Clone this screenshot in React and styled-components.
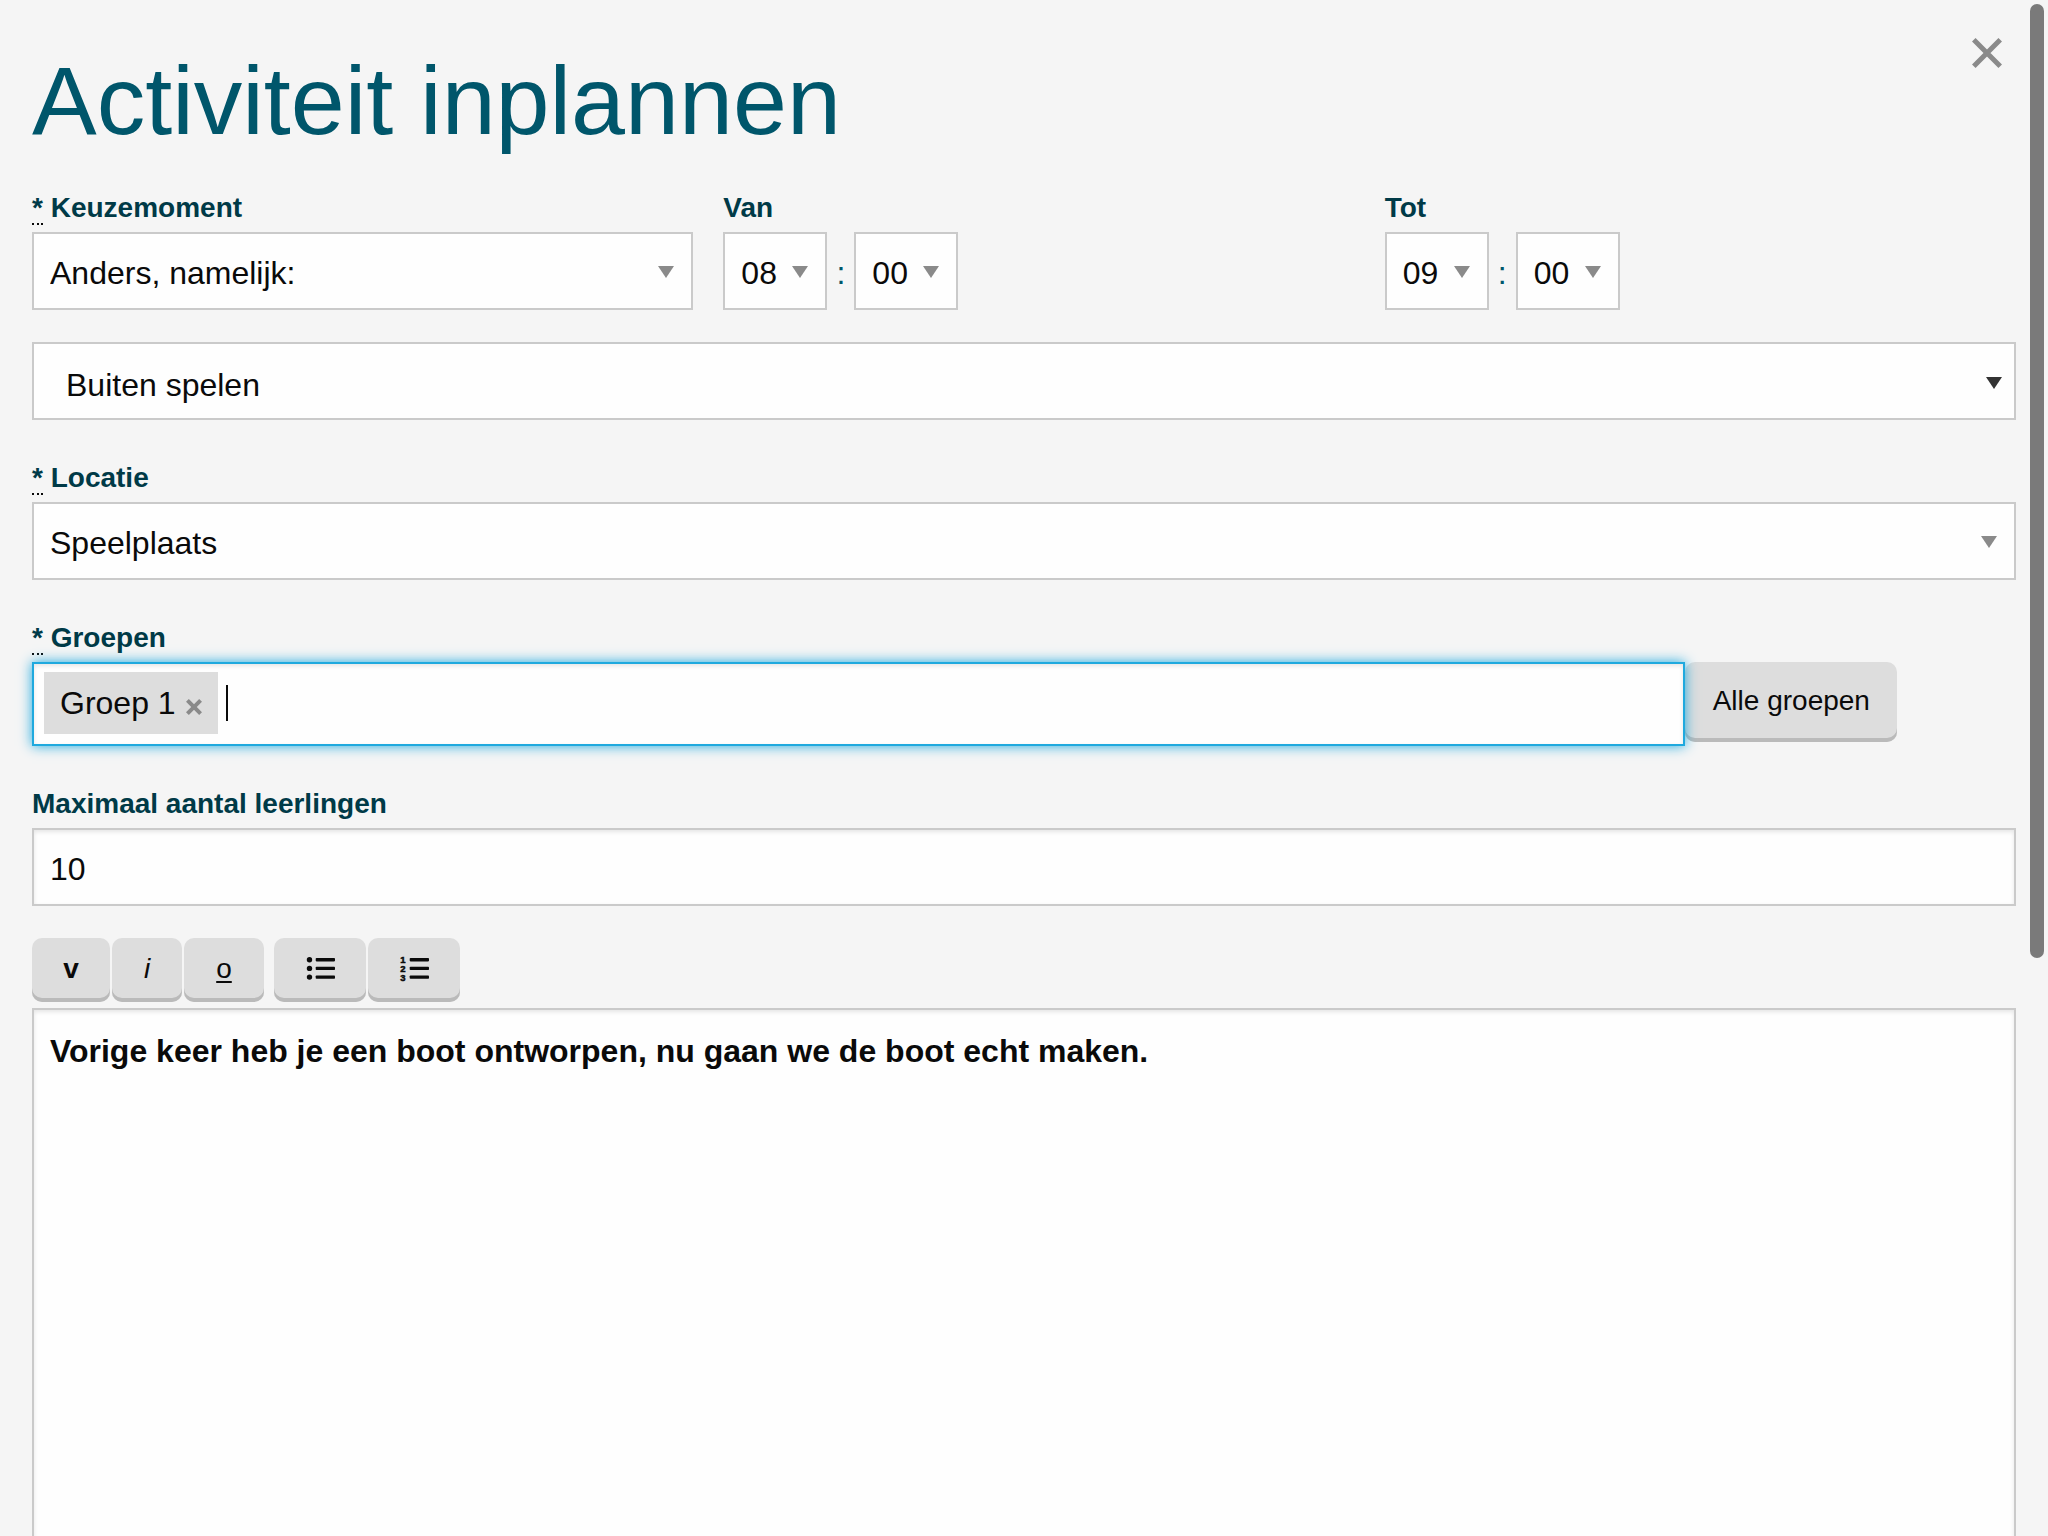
import React, { useState } from 'react';
import styled, { createGlobalStyle } from 'styled-components';

const GlobalStyle = createGlobalStyle`
  *,
  *::before,
  *::after {
    box-sizing: border-box;
  }

  body {
    margin: 0;
    background: #f5f5f5;
    color: #0a0a0a;
    font-family: 'Liberation Sans', Arial, sans-serif;
    font-size: 32px;
  }

  button,
  input,
  select {
    margin: 0;
    font-family: inherit;
    color: inherit;
  }
`;

const Modal = styled.div`
  height: 100vh;
  padding: 32px 32px 0;
  overflow: hidden;
`;

const Header = styled.header`
  display: flex;
  justify-content: space-between;
  align-items: flex-start;
  margin-bottom: 12px;
`;

const Title = styled.h1`
  margin: 0;
  color: #00566b;
  font-size: 97px;
  font-weight: 400;
  line-height: 138px;
`;

const CloseButton = styled.button`
  display: flex;
  padding: 6px 14px;
  border: 0;
  background: none;
  color: #8a8a8a;
  cursor: pointer;
`;

const Columns = styled.div`
  display: grid;
  grid-template-columns: repeat(3, 1fr);
`;

const Column = styled.div`
  & + & {
    padding-left: 30px;
  }
`;

const Field = styled.div`
  margin-bottom: 32px;
`;

const Label = styled.label`
  display: block;
  padding-top: 2px;
  color: #003a47;
  font-size: 28px;
  font-weight: 700;
  line-height: 48px;
`;

const Required = styled.abbr`
  border-bottom: 2px dotted #0a0a0a;
  text-decoration: none;
`;

const SelectWrap = styled.div`
  display: grid;
  align-items: center;
  width: ${(props) => (props.$small ? '104px' : '100%')};

  > * {
    grid-area: 1 / 1;
  }

  svg {
    justify-self: end;
    margin: ${(props) => (props.$search ? '4px 14px 0 0' : '2px 19px 0 0')};
    color: ${(props) => (props.$search ? '#333' : '#8a8a8a')};
    pointer-events: none;
  }
`;

const StyledSelect = styled.select`
  width: 100%;
  height: 78px;
  padding: ${(props) => (props.$search ? '8px 0 0 32px' : '4px 0 0 16px')};
  appearance: none;
  border: 2px solid #cacaca;
  border-radius: 0;
  background: #fefefe;
  font-size: 32px;
`;

const TimeRow = styled.div`
  display: flex;
  align-items: center;
`;

const Colon = styled.span`
  width: 27px;
  padding-top: 4px;
  color: #00566b;
  text-align: center;
`;

const TextInput = styled.input`
  display: block;
  width: 100%;
  height: 78px;
  padding: 4px 16px 0;
  border: 2px solid #cacaca;
  border-radius: 0;
  background: #fefefe;
  box-shadow: inset 0 2px 4px rgba(10, 10, 10, 0.1);
  font-size: 32px;
`;

const GroupRow = styled.div`
  display: flex;
  align-items: flex-start;
`;

const TagBox = styled.div`
  position: relative;
  z-index: 1;
  display: flex;
  align-items: center;
  flex: 0 0 83.333%;
  height: 84px;
  padding: 8px 10px 10px;
  border: 2px solid #1fa9de;
  background: #fefefe;
  box-shadow: inset 0 2px 4px rgba(10, 10, 10, 0.1), 0 0 12px #1fa9de;
`;

const Tag = styled.span`
  display: flex;
  align-items: center;
  gap: 10px;
  height: 62px;
  padding: 0 16px;
  background: #ddd;
  font-size: 32px;
`;

const TagRemove = styled.button`
  display: flex;
  padding: 8px 0 0;
  border: 0;
  background: none;
  color: #8a8a8a;
  cursor: pointer;
`;

const Caret = styled.span`
  width: 2px;
  height: 36px;
  margin-left: 8px;
  background: #0a0a0a;
`;

const TagInput = styled.input`
  flex: 1;
  min-width: 0;
  border: 0;
  outline: 0;
  background: none;
  font-size: 32px;
`;

const Button = styled.button`
  display: flex;
  align-items: center;
  justify-content: center;
  width: ${(props) => props.$width}px;
  height: ${(props) => (props.$compact ? '64px' : '80px')};
  padding: 2px 0 4px;
  border: 0;
  border-radius: 10px;
  background: #ddd;
  box-shadow: inset 0 -4px 0 #bababa;
  font-size: 28px;
  white-space: nowrap;
  cursor: pointer;
`;

const Toolbar = styled.div`
  display: flex;
  gap: 10px;
  margin-bottom: 6px;
`;

const ToolbarGroup = styled.div`
  display: flex;
  gap: 2px;

  u {
    text-underline-offset: 3px;
    text-decoration-thickness: 2px;
  }
`;

const Editor = styled.div`
  min-height: 800px;
  padding: 17px 16px;
  border: 2px solid #cacaca;
  background: #fefefe;
  box-shadow: inset 0 2px 4px rgba(10, 10, 10, 0.1);
  line-height: 48px;
  outline: 0;
`;

const ScrollThumb = styled.div`
  position: fixed;
  top: 4px;
  right: 4px;
  width: 14px;
  height: 62.1vh;
  border-radius: 7px;
  background: #7a7a7a;
`;

const Arrow = () => (
  <svg width="16" height="12" viewBox="0 0 16 12" aria-hidden="true">
    <path d="M0 0h16L8 12z" fill="currentColor" />
  </svg>
);

const Cross = ({ size, thickness }) => {
  const inset = thickness / 2.8;
  const end = size - inset;
  return (
    <svg width={size} height={size} viewBox={`0 0 ${size} ${size}`} aria-hidden="true">
      <path
        d={`M${inset} ${inset}L${end} ${end}M${end} ${inset}L${inset} ${end}`}
        stroke="currentColor"
        strokeWidth={thickness}
      />
    </svg>
  );
};

const listRows = [8.7, 17.4, 26.1];

const ListIcon = ({ numbered }) => (
  <svg width="30" height="36" viewBox="0 0 30 36" fill="currentColor" aria-hidden="true">
    {listRows.map((y, index) => (
      <g key={y}>
        {numbered ? (
          <text x="1.2" y={y + 3.4} fontSize="9.5" fontWeight="700" stroke="currentColor" strokeWidth="0.5">
            {index + 1}
          </text>
        ) : (
          <circle cx="4.5" cy={y} r="2.7" />
        )}
        <rect x="10.7" y={y - 1.7} width="19.3" height="3.4" rx="0.8" />
      </g>
    ))}
  </svg>
);

const Select = ({ options, small, search, ...rest }) => (
  <SelectWrap $small={small} $search={search}>
    <StyledSelect $search={search} {...rest}>
      {options.map((option) => (
        <option key={option}>{option}</option>
      ))}
    </StyledSelect>
    <Arrow />
  </SelectWrap>
);

const FieldLabel = ({ required, children, ...rest }) => (
  <Label {...rest}>
    {required ? <Required>*</Required> : null}
    {required ? ' ' : null}
    {children}
  </Label>
);

const TimeField = ({ id, label, hour }) => (
  <Field>
    <FieldLabel htmlFor={id}>{label}</FieldLabel>
    <TimeRow>
      <Select small id={id} options={[hour]} />
      <Colon>:</Colon>
      <Select small aria-label={label} options={['00']} />
    </TimeRow>
  </Field>
);

const App = () => {
  const [groups, setGroups] = useState(['Groep 1']);

  return (
    <>
      <GlobalStyle />
      <Modal>
        <Header>
          <Title>Activiteit inplannen</Title>
          <CloseButton type="button" aria-label="Sluiten">
            <Cross size={30} thickness={5} />
          </CloseButton>
        </Header>

        <Columns>
          <Column>
            <Field>
              <FieldLabel required htmlFor="moment">
                Keuzemoment
              </FieldLabel>
              <Select id="moment" options={['Anders, namelijk:']} />
            </Field>
          </Column>
          <Column>
            <TimeField id="from" label="Van" hour="08" />
          </Column>
          <Column>
            <TimeField id="until" label="Tot" hour="09" />
          </Column>
        </Columns>

        <Field>
          <Select search aria-label="Activiteit" options={['Buiten spelen']} />
        </Field>

        <Field>
          <FieldLabel required htmlFor="location">
            Locatie
          </FieldLabel>
          <Select id="location" options={['Speelplaats']} />
        </Field>

        <Field>
          <FieldLabel required htmlFor="groups">
            Groepen
          </FieldLabel>
          <GroupRow>
            <TagBox>
              {groups.map((group) => (
                <Tag key={group}>
                  {group}
                  <TagRemove
                    type="button"
                    aria-label={group}
                    onClick={() => setGroups(groups.filter((other) => other !== group))}
                  >
                    <Cross size={16} thickness={4} />
                  </TagRemove>
                </Tag>
              ))}
              <Caret />
              <TagInput id="groups" />
            </TagBox>
            <Button type="button" $width={212}>
              Alle groepen
            </Button>
          </GroupRow>
        </Field>

        <Field>
          <FieldLabel htmlFor="maximum">Maximaal aantal leerlingen</FieldLabel>
          <TextInput id="maximum" defaultValue="10" />
        </Field>

        <Toolbar>
          <ToolbarGroup>
            <Button type="button" $compact $width={78}>
              <b>v</b>
            </Button>
            <Button type="button" $compact $width={70}>
              <i>i</i>
            </Button>
            <Button type="button" $compact $width={80}>
              <u>o</u>
            </Button>
          </ToolbarGroup>
          <ToolbarGroup>
            <Button type="button" $compact $width={92} aria-label="Lijst">
              <ListIcon />
            </Button>
            <Button type="button" $compact $width={92} aria-label="Genummerde lijst">
              <ListIcon numbered />
            </Button>
          </ToolbarGroup>
        </Toolbar>
        <Editor contentEditable suppressContentEditableWarning role="textbox" aria-multiline="true">
          <strong>Vorige keer heb je een boot ontworpen, nu gaan we de boot echt maken.</strong>
        </Editor>
      </Modal>
      <ScrollThumb />
    </>
  );
};

export default App;
